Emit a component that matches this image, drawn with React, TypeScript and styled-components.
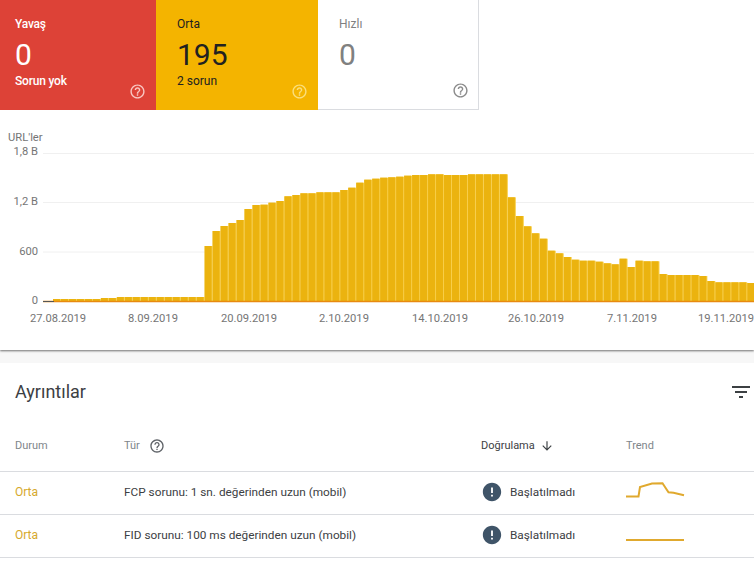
import styled, { createGlobalStyle } from 'styled-components'

const GlobalStyle = createGlobalStyle`
  html, body {
    margin: 0;
    background: #fff;
    overflow: hidden;
  }
  body {
    font-family: Roboto, "Liberation Sans", sans-serif;
  }
`

const Page = styled.div`
  width: 754px;
  height: 573px;
  background: #f7f7f7;
  overflow: hidden;
`

const ChartCard = styled.section`
  background: #fff;
  height: 350px;
  box-shadow: 0 1px 2px rgba(0, 0, 0, 0.55);
`

const Tiles = styled.div`
  display: flex;
  height: 110px;
`

const Tile = styled.div<{ $bg: string; $fg: string; $width: number; $inset: number; $border?: boolean }>`
  box-sizing: border-box;
  width: ${(p) => p.$width}px;
  padding: 16px 10px 10px ${(p) => p.$inset}px;
  background: ${(p) => p.$bg};
  color: ${(p) => p.$fg};
  display: flex;
  justify-content: space-between;
  align-items: flex-end;
  ${(p) => p.$border && 'padding-right: 9px; border: solid #dadce0; border-width: 0 1px 1px 0;'}
`

const TileText = styled.div`
  align-self: flex-start;
`

const TileLabel = styled.div<{ $bold?: boolean }>`
  font-size: 12px;
  line-height: 16px;
  font-weight: ${(p) => (p.$bold ? 500 : 400)};
  letter-spacing: ${(p) => (p.$bold ? '-0.2px' : '0')};
`

const TileValue = styled.div`
  font-size: 30px;
  line-height: 36px;
  margin-top: 5px;
`

const HelpIcon = styled.svg<{ $color: string; $size?: number }>`
  width: ${(p) => p.$size ?? 17}px;
  height: ${(p) => p.$size ?? 17}px;
  fill: ${(p) => p.$color};
  flex: none;
  display: block;
`

const ChartBox = styled.svg`
  display: block;
  width: 754px;
  height: 240px;
`

const AxisText = styled.text<{ $anchor: string }>`
  font-size: 11.2px;
  fill: #757575;
  text-anchor: ${(p) => p.$anchor};
`

const Details = styled.section`
  margin-top: 13px;
  background: #fff;
  height: 210px;
`

const DetailsHead = styled.div`
  display: flex;
  align-items: center;
  justify-content: space-between;
  padding: 15px 1px 0 15px;
  height: 28px;
`

const Title = styled.h2`
  margin: 0;
  font-size: 18px;
  line-height: 28px;
  font-weight: 400;
  color: #3c4043;
`

const FilterIcon = styled.svg`
  width: 24px;
  height: 24px;
  fill: #3c4043;
  display: block;
`

const Row = styled.div<{ $height: number }>`
  display: grid;
  grid-template-columns: 124px 357px 145px 1fr;
  align-items: center;
  height: ${(p) => p.$height}px;
  padding-bottom: 2px;
  box-sizing: border-box;
  border-bottom: 1px solid #dadce0;
  font-size: 11.8px;
  color: #3c4043;
`

const HeaderRow = styled(Row)`
  margin-top: 16px;
`

const Cell = styled.div`
  display: flex;
  align-items: center;
`

const FirstCell = styled(Cell)`
  padding-left: 15px;
`

const HeadText = styled.span<{ $dark?: boolean }>`
  font-size: 11px;
  color: ${(p) => (p.$dark ? '#3c4043' : '#80868b')};
`

const HeadHelp = styled.span`
  margin-left: 9px;
`

const Status = styled.span`
  color: #d6a92c;
  font-size: 12px;
`

const SortIcon = styled.svg`
  width: 14px;
  height: 14px;
  fill: #3c4043;
  margin-left: 5px;
`

const ErrorIcon = styled.svg`
  width: 22px;
  height: 22px;
  fill: #3f5468;
  margin-right: 7px;
  flex: none;
`

const Spark = styled.svg`
  width: 62px;
  height: 24px;
  display: block;
  fill: none;
  stroke: #e0a92e;
  stroke-width: 2;
`

const helpPath =
  'M11 18h2v-2h-2v2zm1-16C6.48 2 2 6.48 2 12s4.48 10 10 10 10-4.48 10-10S17.52 2 12 2zm0 18c-4.41 0-8-3.59-8-8s3.59-8 8-8 8 3.59 8 8-3.59 8-8 8zm0-14c-2.21 0-4 1.79-4 4h2c0-1.1.9-2 2-2s2 .9 2 2c0 2-3 1.75-3 5h2c0-2.25 3-2.5 3-5 0-2.21-1.79-4-4-4z'

const errorPath =
  'M12 2C6.48 2 2 6.48 2 12s4.48 10 10 10 10-4.48 10-10S17.52 2 12 2zm1 15h-2v-2h2v2zm0-4h-2V7h2v6z'

const barPitch = 7.98

const barTops = [
  299, 299, 299, 299, 299, 299, 298, 298, 297, 297, 297, 297, 297, 297, 297, 297, 297, 297, 297,
  246, 231, 226, 223, 220, 209, 205, 204.7, 202.7, 201, 196.3, 195, 193.3, 193.3, 192.3, 192.3,
  192.3, 190, 187.7, 182.7, 179.7, 178.7, 177.7, 177.3, 176.7, 175.7, 175, 175, 174.3, 174.3, 175,
  175, 175, 174.3, 174.3, 174.3, 174.3, 174.3, 197.3, 216, 226.3, 233.3, 238.7, 250.7, 253.3, 257,
  259.7, 260.7, 260.7, 261.7, 263.3, 264.3, 258.7, 267, 260.7, 261.3, 261.3, 274, 275, 275, 275,
  275, 276, 281, 282.3, 282.3, 282.3, 282.3, 283,
]

const yLabels = [
  { label: '1,8 B', line: 153.5, y: 155 },
  { label: '1,2 B', line: 202.5, y: 205 },
  { label: '600', line: 252, y: 255 },
  { label: '0', line: 301.5, y: 304 },
]

const xLabels = [
  { label: '27.08.2019', x: 58 },
  { label: '8.09.2019', x: 153 },
  { label: '20.09.2019', x: 249 },
  { label: '2.10.2019', x: 344 },
  { label: '14.10.2019', x: 440 },
  { label: '26.10.2019', x: 536 },
  { label: '7.11.2019', x: 632 },
  { label: '19.11.2019', x: 726 },
]

function Help({ color, size }: { color: string; size?: number }) {
  return (
    <HelpIcon viewBox="0 0 24 24" $color={color} $size={size}>
      <path d={helpPath} />
    </HelpIcon>
  )
}

function Chart() {
  return (
    <ChartBox viewBox="0 110 754 240">
      <AxisText $anchor="start" x={8} y={141}>
        URL'ler
      </AxisText>
      {yLabels.map((t) => (
        <g key={t.label}>
          {t.label !== '0' && <line x1={43} x2={754} y1={t.line} y2={t.line} stroke="#f0f0f0" />}
          <AxisText $anchor="end" x={38} y={t.y}>
            {t.label}
          </AxisText>
        </g>
      ))}
      {barTops.map((top, i) => (
        <g key={i}>
          <rect x={53 + i * barPitch} y={top} width={barPitch} height={301 - top} fill="#f8cf4a" />
          <rect x={53 + i * barPitch} y={top} width={7} height={301 - top} fill="#ebb30f" />
        </g>
      ))}
      <line x1={43} x2={754} y1={301.5} y2={301.5} stroke="#e88a10" strokeWidth={1.5} />
      <line x1={43} x2={54} y1={301.5} y2={301.5} stroke="#555" strokeWidth={1} />
      {xLabels.map((t) => (
        <AxisText key={t.label} $anchor="middle" x={t.x} y={322}>
          {t.label}
        </AxisText>
      ))}
    </ChartBox>
  )
}

export default function App() {
  return (
    <Page>
      <GlobalStyle />
      <ChartCard>
        <Tiles>
          <Tile $bg="#dd4237" $fg="#fff" $width={156} $inset={15}>
            <TileText>
              <TileLabel $bold>Yavaş</TileLabel>
              <TileValue>0</TileValue>
              <TileLabel $bold>Sorun yok</TileLabel>
            </TileText>
            <Help color="#f9c8c3" />
          </Tile>
          <Tile $bg="#f4b400" $fg="#212121" $width={162} $inset={21}>
            <TileText>
              <TileLabel>Orta</TileLabel>
              <TileValue>195</TileValue>
              <TileLabel>2 sorun</TileLabel>
            </TileText>
            <Help color="#fbdf7d" />
          </Tile>
          <Tile $bg="#fff" $fg="#808080" $width={161} $inset={21} $border>
            <TileText>
              <TileLabel>Hızlı</TileLabel>
              <TileValue>0</TileValue>
            </TileText>
            <Help color="#8a8a8a" />
          </Tile>
        </Tiles>
        <Chart />
      </ChartCard>
      <Details>
        <DetailsHead>
          <Title>Ayrıntılar</Title>
          <FilterIcon viewBox="0 0 24 24">
            <path d="M10 18h4v-2h-4v2zM3 6v2h18V6H3zm3 7h12v-2H6v2z" />
          </FilterIcon>
        </DetailsHead>
        <HeaderRow $height={50}>
          <FirstCell>
            <HeadText>Durum</HeadText>
          </FirstCell>
          <Cell>
            <HeadText>Tür</HeadText>
            <HeadHelp>
              <Help color="#5f6368" size={16} />
            </HeadHelp>
          </Cell>
          <Cell>
            <HeadText $dark>Doğrulama</HeadText>
            <SortIcon viewBox="0 0 24 24">
              <path d="M20 12l-1.41-1.41L13 16.17V4h-2v12.17l-5.58-5.59L4 12l8 8 8-8z" />
            </SortIcon>
          </Cell>
          <Cell>
            <HeadText>Trend</HeadText>
          </Cell>
        </HeaderRow>
        <Row $height={43}>
          <FirstCell>
            <Status>Orta</Status>
          </FirstCell>
          <Cell>FCP sorunu: 1 sn. değerinden uzun (mobil)</Cell>
          <Cell>
            <ErrorIcon viewBox="0 0 24 24">
              <path d={errorPath} />
            </ErrorIcon>
            Başlatılmadı
          </Cell>
          <Cell>
            <Spark viewBox="0 0 62 24">
              <polyline points="0,16.5 12.5,16.5 14,7 26,3.5 36.5,3.2 42.5,12.2 47.5,12.8 58,15.2" />
            </Spark>
          </Cell>
        </Row>
        <Row $height={43}>
          <FirstCell>
            <Status>Orta</Status>
          </FirstCell>
          <Cell>FID sorunu: 100 ms değerinden uzun (mobil)</Cell>
          <Cell>
            <ErrorIcon viewBox="0 0 24 24">
              <path d={errorPath} />
            </ErrorIcon>
            Başlatılmadı
          </Cell>
          <Cell>
            <Spark viewBox="0 0 62 24">
              <polyline points="0,17 58,17" />
            </Spark>
          </Cell>
        </Row>
      </Details>
    </Page>
  )
}
